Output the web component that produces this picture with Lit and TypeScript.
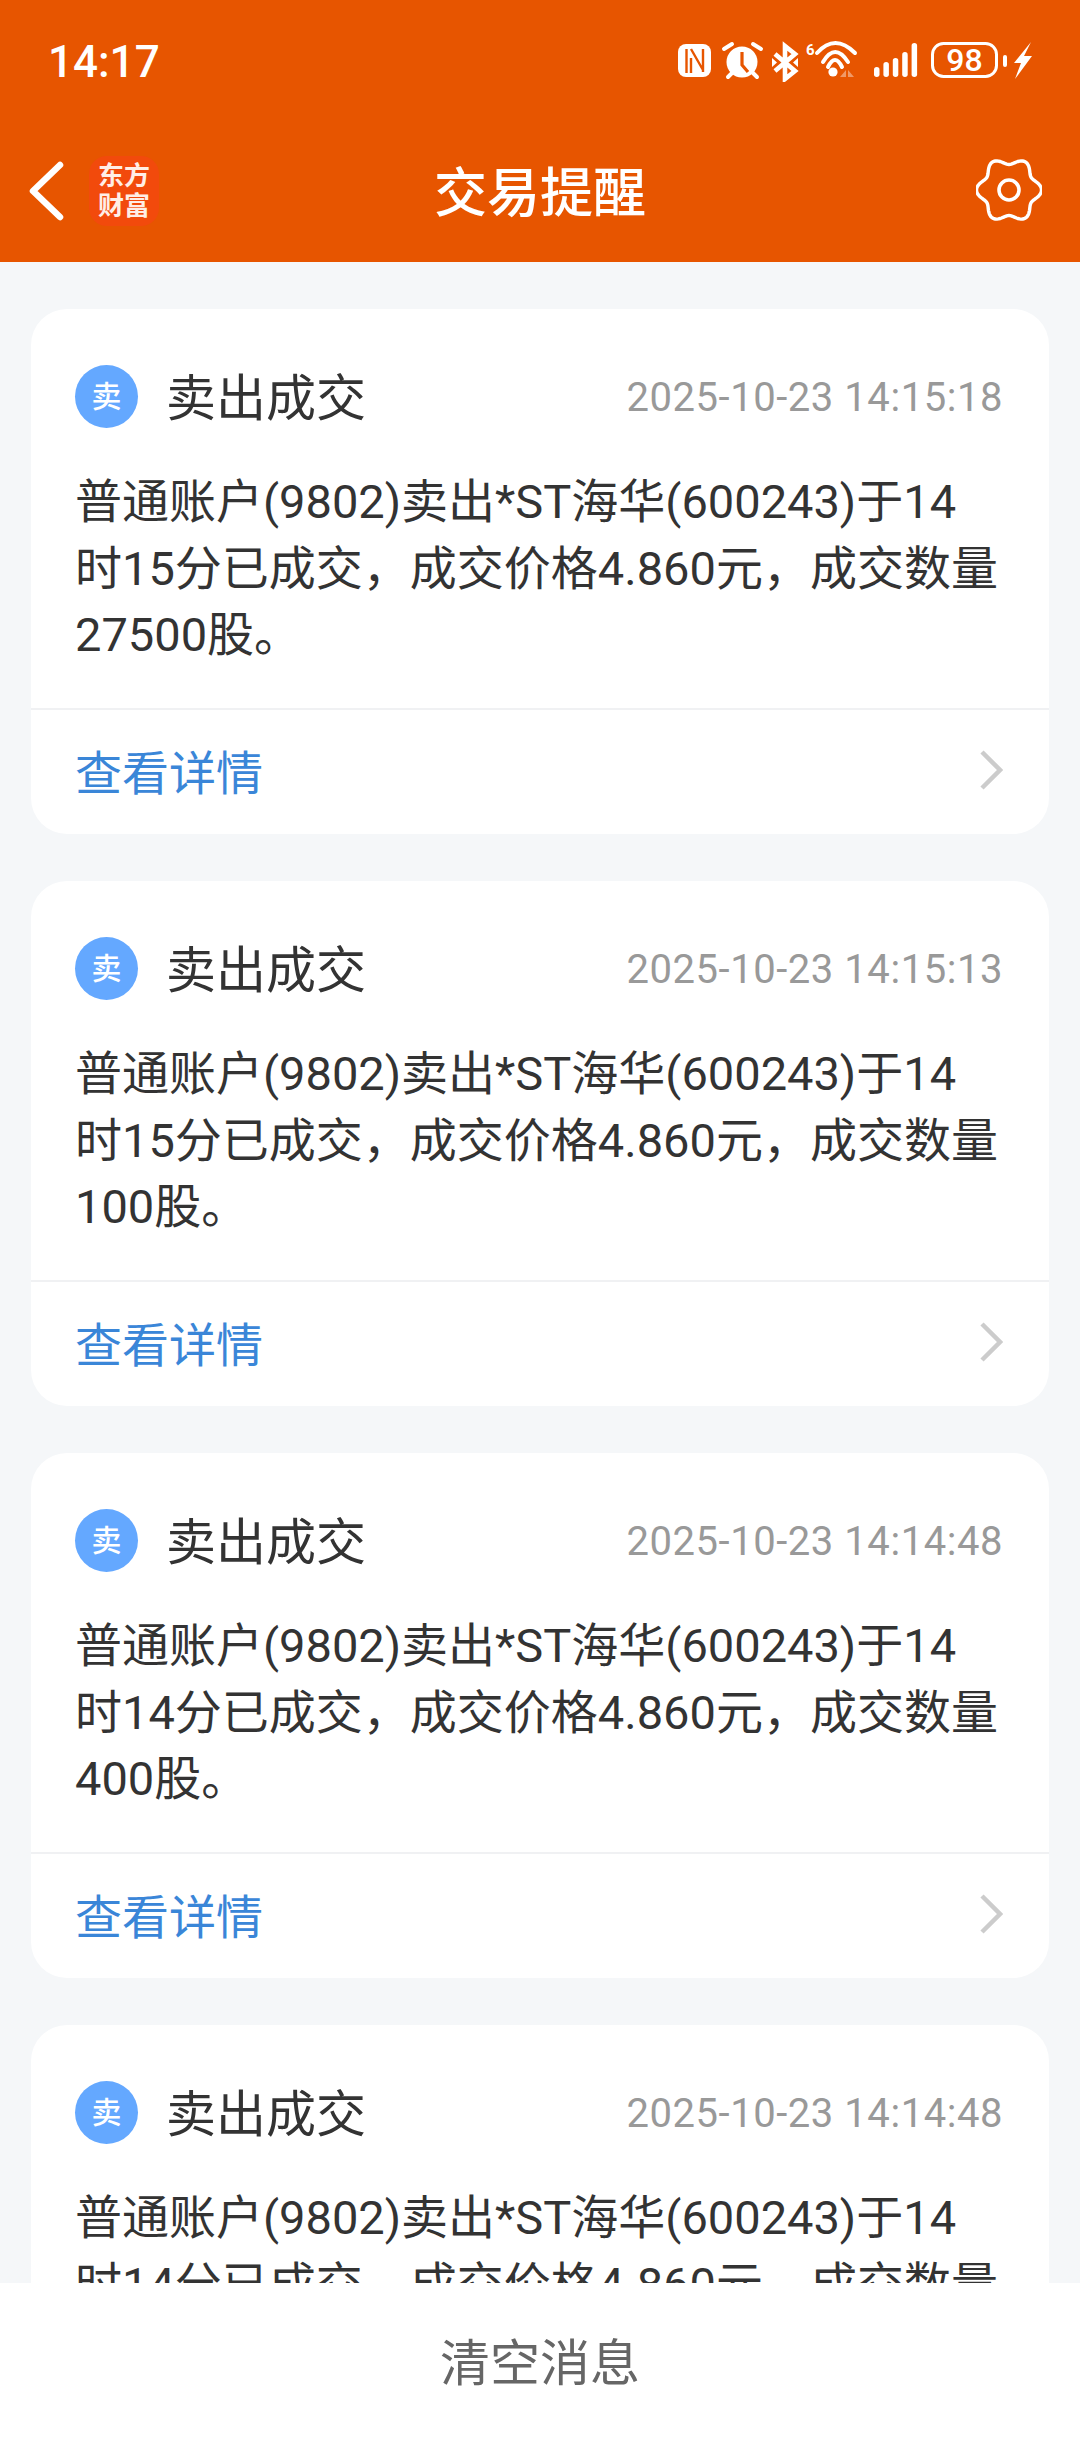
import { LitElement, html, css } from 'lit';
import { customElement } from 'lit/decorators.js';

interface Notice {
    time: string;
    minute: string;
    qty: string;
}

const notices: Notice[] = [
    { time: '2025-10-23 14:15:18', minute: '15', qty: '27500' },
    { time: '2025-10-23 14:15:13', minute: '15', qty: '100' },
    { time: '2025-10-23 14:14:48', minute: '14', qty: '400' },
    { time: '2025-10-23 14:14:48', minute: '14', qty: '400' },
];

// six soft lobes, flat on top, same as the settings icon
const gearOutline = () => {
    const pts: string[] = [];
    for (let i = 0; i < 144; i++) {
        const a = (i / 144) * Math.PI * 2;
        const r = 29 + 3.5 * Math.cos(6 * a);
        pts.push(`${(33 + r * Math.cos(a)).toFixed(2)},${(33 + r * Math.sin(a)).toFixed(2)}`);
    }
    return pts.join(' ');
};

@customElement('app-root')
export class AppRoot extends LitElement {
    static styles = css`
        :host {
            display: flex;
            flex-direction: column;
            width: 1080px;
            height: 2440px;
            overflow: hidden;
            background: #f5f7f9;
            font-family: "Roboto", "Noto Sans CJK SC", sans-serif;
        }
        .top {
            flex: none;
            height: 262px;
            background: #e75500;
            color: #fff;
            display: flex;
            flex-direction: column;
        }
        .status {
            height: 122px;
            flex: none;
            display: flex;
            align-items: flex-start;
            justify-content: space-between;
            padding: 36px 48px 0 48px;
            box-sizing: border-box;
        }
        .clock {
            font-size: 44px;
            line-height: 52px;
            font-weight: 500;
        }
        .status-icons {
            display: block;
            margin-top: 4px;
        }
        .nav {
            flex: 1;
            position: relative;
            display: flex;
            align-items: center;
            justify-content: space-between;
            padding: 0 38px 2px 28px;
        }
        .nav-left {
            display: flex;
            align-items: center;
            gap: 25px;
        }
        .logo {
            width: 70px;
            height: 70px;
            border-radius: 18px;
            background: #f24a0c;
            display: flex;
            flex-direction: column;
            align-items: center;
            justify-content: center;
            font-size: 26px;
            line-height: 30px;
            font-weight: 700;
            color: #ffeee6;
        }
        .gear {
            margin-top: -3px;
        }
        .nav-title {
            position: absolute;
            left: 0;
            right: 0;
            top: 42px;
            text-align: center;
            font-size: 53px;
            line-height: 60px;
            font-weight: 500;
        }
        .list {
            flex: 1;
            min-height: 0;
            overflow: hidden;
            padding: 47px 31px 0;
            display: flex;
            flex-direction: column;
            gap: 47px;
        }
        .card {
            flex: none;
            height: 525px;
            box-sizing: border-box;
            background: #fff;
            border-radius: 36px;
            display: flex;
            flex-direction: column;
        }
        .card-main {
            flex: 1;
            padding: 56px 48px 0 44px;
        }
        .card-head {
            display: flex;
            align-items: center;
            height: 63px;
        }
        .badge {
            width: 63px;
            height: 63px;
            border-radius: 50%;
            background: #64a8ff;
            color: #fff;
            font-size: 30px;
            font-weight: 500;
            line-height: 63px;
            text-align: center;
        }
        .title {
            margin: 6px 0 0 28px;
            font-size: 50px;
            line-height: 63px;
            color: #333;
        }
        .time {
            margin: 2px -2px 0 auto;
            font-size: 40px;
            letter-spacing: 0.55px;
            line-height: 63px;
            color: #999;
        }
        .body {
            margin-top: 41px;
            font-size: 47px;
            line-height: 66.5px;
            color: #333;
        }
        .card-foot {
            flex: none;
            height: 126px;
            box-sizing: border-box;
            border-top: 2px solid #f0f1f3;
            display: flex;
            align-items: center;
            justify-content: space-between;
            padding: 0 46px 5px 44px;
            font-size: 47px;
            color: #3a86d8;
        }
        .bottom {
            flex: none;
            height: 157px;
            background: #fff;
            display: flex;
            align-items: center;
            justify-content: center;
            padding-bottom: 5px;
            box-sizing: border-box;
            font-size: 50px;
            color: #666;
        }
    `;

    render() {
        return html`
            <div class="top">
                <div class="status">
                    <span class="clock">14:17</span>
                    ${this._statusIcons()}
                </div>
                <div class="nav">
                    <div class="nav-left">
                        <svg width="36" height="60" viewBox="0 0 36 60">
                            <path d="M32 4 L5 30 L32 56" fill="none" stroke="#fff" stroke-width="6.5" stroke-linecap="round" stroke-linejoin="round"/>
                        </svg>
                        <div class="logo"><span>东方</span><span>财富</span></div>
                    </div>
                    <div class="nav-title">交易提醒</div>
                    <svg class="gear" width="66" height="66" viewBox="0 0 66 66">
                        <polygon points=${gearOutline()} fill="none" stroke="#fff" stroke-width="3.4" stroke-linejoin="round"/>
                        <circle cx="33" cy="33" r="10" fill="none" stroke="#fff" stroke-width="3.6"/>
                    </svg>
                </div>
            </div>
            <div class="list">
                ${notices.map((n) => html`
                    <div class="card">
                        <div class="card-main">
                            <div class="card-head">
                                <div class="badge">卖</div>
                                <div class="title">卖出成交</div>
                                <div class="time">${n.time}</div>
                            </div>
                            <div class="body">普通账户(9802)卖出*ST海华(600243)于14时${n.minute}分已成交，成交价格4.860元，成交数量${n.qty}股。</div>
                        </div>
                        <div class="card-foot">
                            <span>查看详情</span>
                            <svg width="24" height="40" viewBox="0 0 24 40">
                                <path d="M3 2 L21 20 L3 38" fill="none" stroke="#ccc" stroke-width="4.5"/>
                            </svg>
                        </div>
                    </div>
                `)}
            </div>
            <div class="bottom">清空消息</div>
        `;
    }

    _statusIcons() {
        return html`
            <svg class="status-icons" width="354" height="42" viewBox="0 0 354 42">
                <!-- nfc -->
                <rect x="0" y="4" width="33" height="33" rx="8" fill="#fff"/>
                <path d="M8.5 9V33M13 9L25 30M25 9V32M13 18V33" fill="none" stroke="#e75500" stroke-width="2.4"/>
                <!-- alarm -->
                <circle cx="64" cy="22" r="15.5" fill="#fff"/>
                <path d="M46 9L54 4M75 4L83 9M50 37L55 32M74 32L79 37" fill="none" stroke="#fff" stroke-width="4" stroke-linecap="round"/>
                <path d="M64 12V25L70 32" fill="none" stroke="#e75500" stroke-width="3.2"/>
                <!-- bluetooth -->
                <path d="M97 14L117 31L107 39V6L117 14L97 31" fill="none" stroke="#fff" stroke-width="4.6"/>
                <path d="M94 18L99 22.5L94 27zM120 18L115 22.5L120 27z" fill="#fff"/>
                <!-- wifi -->
                <text x="128" y="15" font-size="15" font-weight="700" fill="#fff" font-family="Roboto">6</text>
                <path d="M139 13Q157 -7 177 13M145 22Q157 2 170 22M150 27Q157 13 164 27" fill="none" stroke="#fff" stroke-width="4" stroke-linecap="round"/>
                <circle cx="155" cy="32" r="4.6" fill="#fff"/>
                <path d="M168 30L162 37H168zM170 30L176 37H170z" fill="#fff" opacity="0.4"/>
                <!-- signal -->
                <g fill="#fff">
                    <rect x="196" y="27" width="5.5" height="10" rx="2.7"/>
                    <rect x="205.4" y="22" width="5.5" height="15" rx="2.7"/>
                    <rect x="214.8" y="18" width="5.5" height="19" rx="2.7"/>
                    <rect x="224.2" y="12" width="5.5" height="25" rx="2.7"/>
                    <rect x="233.6" y="3" width="5.5" height="34" rx="2.7"/>
                </g>
                <!-- battery -->
                <rect x="254.5" y="3.5" width="64" height="33" rx="11" fill="none" stroke="#fff" stroke-width="3"/>
                <text x="286.5" y="31" font-size="32" font-weight="500" fill="#fff" font-family="Roboto" text-anchor="middle">98</text>
                <rect x="325" y="15" width="4" height="12" rx="2" fill="#fff"/>
                <path d="M353 2L336 23H343L337 39L354 16H346z" fill="#fff"/>
            </svg>
        `;
    }
}
